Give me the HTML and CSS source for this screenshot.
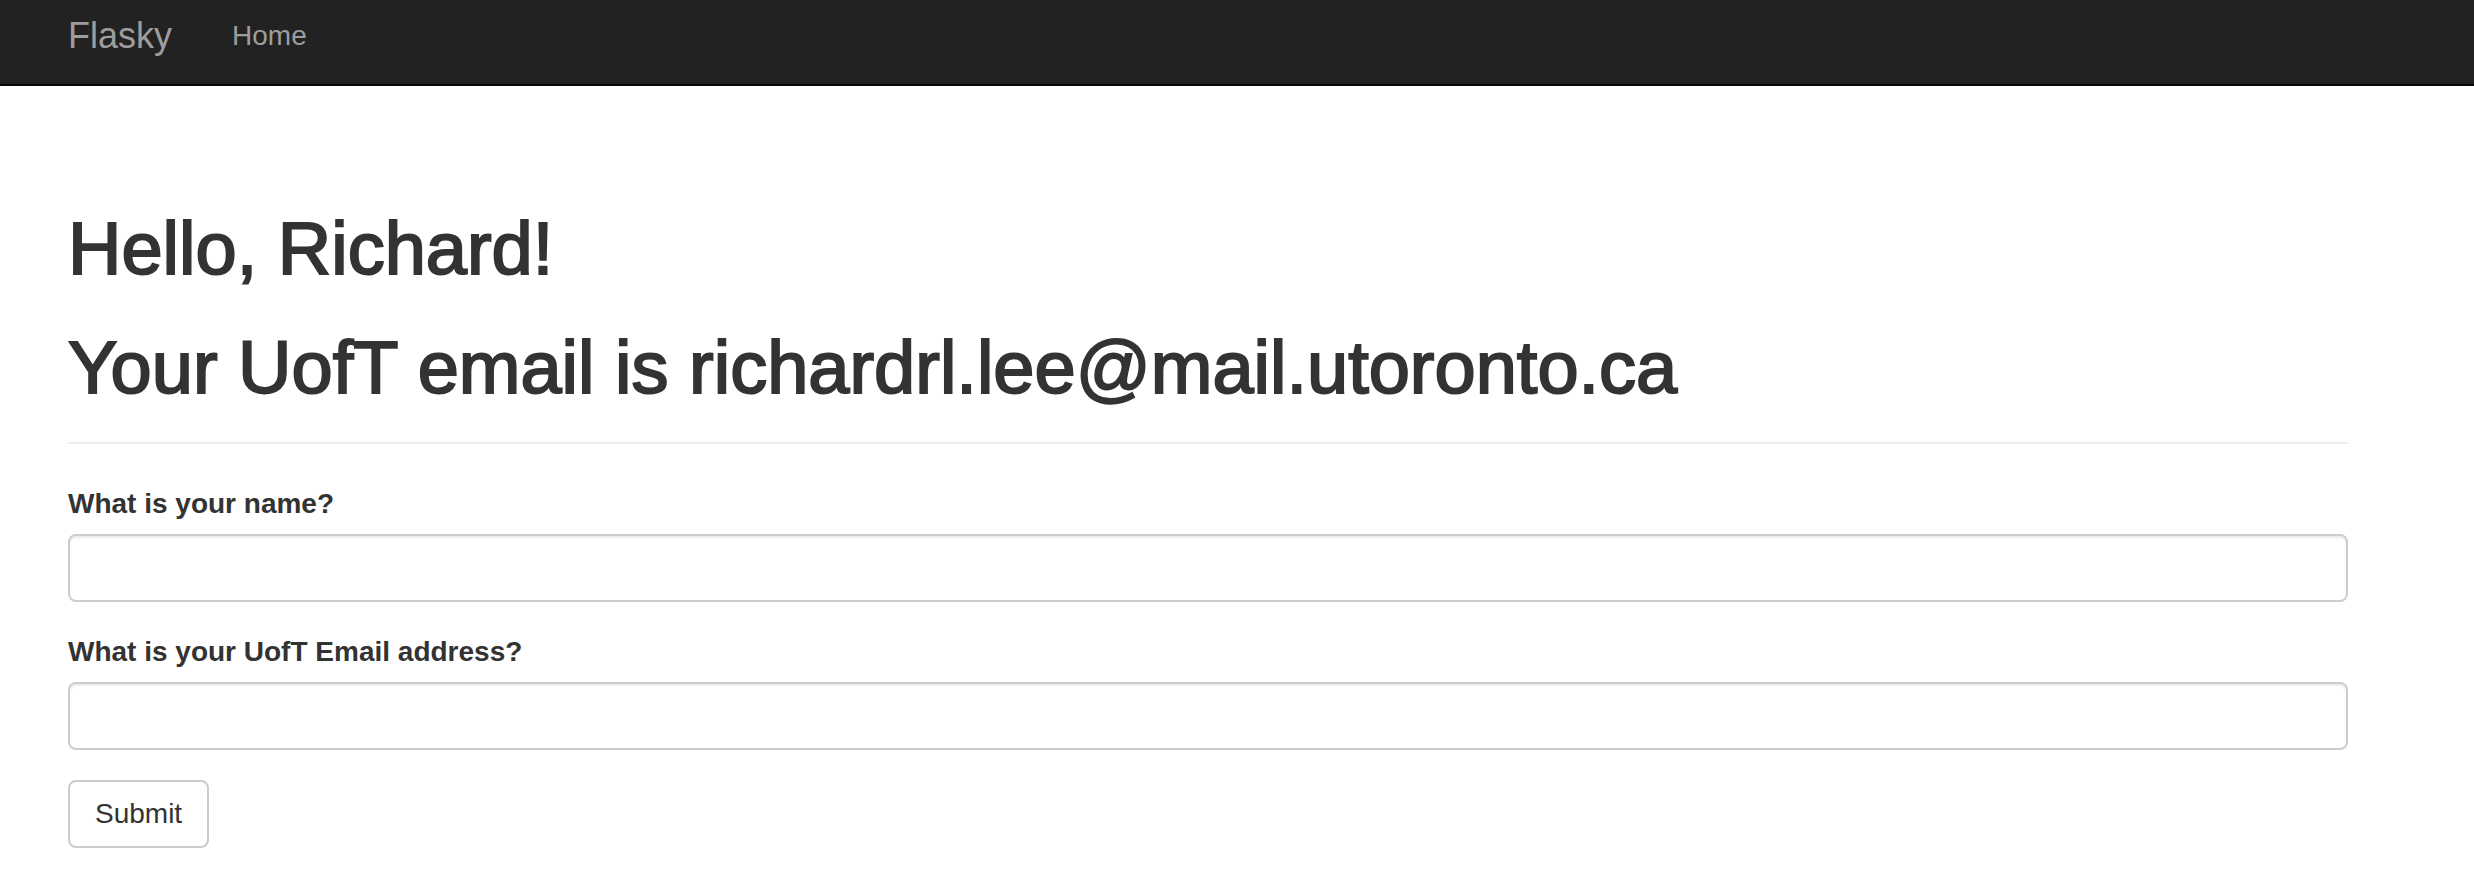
FILE: index.html
```html
<!DOCTYPE html>
<html lang="en">
<head>
<meta charset="utf-8">
<title>Flasky</title>
<link rel="stylesheet" href="styles.css">
</head>
<body>
<nav class="navbar">
  <div class="navbar-inner">
    <a class="brand" href="#">Flasky</a>
    <a class="nav-link" href="#">Home</a>
  </div>
</nav>
<main class="content">
  <div class="page-header">
    <h1 class="heading">Hello, Richard!</h1>
    <h1 class="heading">Your UofT email is richardrl.lee@mail.utoronto.ca</h1>
  </div>
  <form class="form">
    <div class="form-group">
      <label class="label" for="name">What is your name?</label>
      <input class="input" id="name" type="text">
    </div>
    <div class="form-group">
      <label class="label" for="email">What is your UofT Email address?</label>
      <input class="input" id="email" type="text">
    </div>
    <button class="btn" type="button">Submit</button>
  </form>
</main>
</body>
</html>
```

FILE: styles.css
```css
html, body {
  margin: 0;
  padding: 0;
  background: #fff;
}

body {
  font-family: "Liberation Sans", Helvetica, Arial, sans-serif;
  color: #333;
}

.navbar {
  background: #222;
  border-bottom: 2px solid #080808;
  height: 84px;
}

.navbar-inner {
  display: flex;
  align-items: flex-start;
  padding-left: 38px;
  padding-top: 16px;
}

.brand {
  font-size: 36px;
  line-height: 40px;
  color: #9d9d9d;
  text-decoration: none;
  padding: 0 30px;
}

.nav-link {
  font-size: 28px;
  line-height: 40px;
  color: #9d9d9d;
  text-decoration: none;
  padding: 0 30px;
}

.content {
  padding: 83px 0 0 68px;
  width: 2280px;
}

.page-header {
  padding-bottom: 15px;
  border-bottom: 2px solid #eee;
  margin-bottom: 40px;
}

.heading {
  font-size: 74px;
  line-height: 79px;
  font-weight: 500;
  margin: 40px 0 20px;
  color: #333;
  white-space: nowrap;
  -webkit-text-stroke: 2px #333;
}

.form-group {
  margin-bottom: 30px;
}

.label {
  display: block;
  font-size: 28px;
  line-height: 40px;
  font-weight: bold;
  margin-bottom: 10px;
}

.input {
  display: block;
  box-sizing: border-box;
  width: 100%;
  height: 68px;
  margin: 0;
  padding: 12px 24px;
  font-size: 28px;
  border: 2px solid #ccc;
  border-radius: 8px;
  background: #fff;
  box-shadow: inset 0 2px 2px rgba(0, 0, 0, 0.075);
}

.btn {
  display: inline-block;
  margin: 0;
  font-family: "Liberation Sans", Helvetica, Arial, sans-serif;
  font-size: 28px;
  line-height: 40px;
  padding: 12px 25px;
  color: #333;
  background: #fff;
  border: 2px solid #ccc;
  border-radius: 8px;
}
```
